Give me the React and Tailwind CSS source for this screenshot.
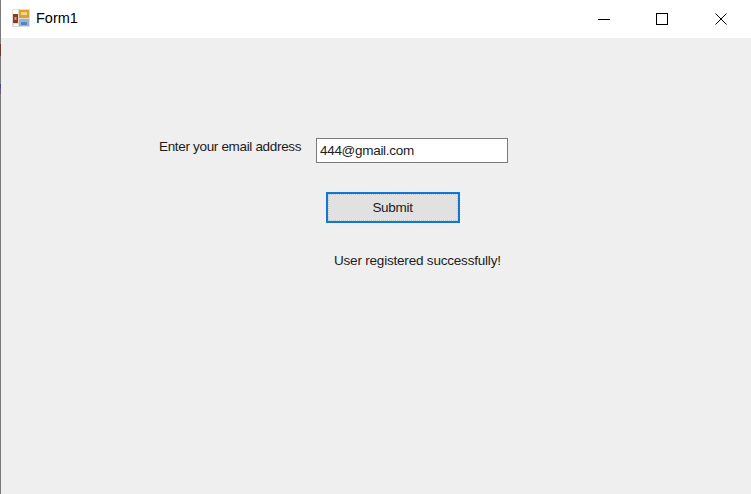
export default function App() {
  return (
    <div className="w-[751px] h-[494px] flex overflow-hidden font-['Liberation_Sans',Arial,sans-serif] text-[#1c1c1c]">
      <div className="w-px h-full bg-[#7a7a7a] flex flex-col">
        <div className="h-[44px] shrink-0" />
        <div className="h-[12px] shrink-0 bg-[#6b3a34]" />
        <div className="h-[28px] shrink-0" />
        <div className="h-[4px] shrink-0 bg-[#3c4a8c]" />
        <div className="h-[6px] shrink-0 bg-[#6a5a7a]" />
      </div>
      <div className="flex-1 flex flex-col bg-[#efefef]">
        <header className="h-[38px] bg-white flex items-center">
          <svg width="18" height="18" viewBox="0 0 18 18" className="ml-[11px] mt-[-2px] shrink-0">
            <rect x="0" y="0" width="18" height="18" fill="#dcdcdc" />
            <rect x="1" y="1" width="5" height="4" fill="#ffffff" />
            <rect x="1" y="5" width="5" height="9" fill="#8c3b22" />
            <rect x="2.5" y="8" width="2" height="3" fill="#d9a05a" />
            <rect x="7" y="1" width="10" height="8" fill="#e0a030" />
            <rect x="9" y="3" width="6" height="3" fill="#f5d678" />
            <rect x="7" y="10" width="10" height="7" fill="#9ab4d0" />
            <rect x="9" y="13" width="6" height="3" fill="#4d86c4" />
            <rect x="2" y="15" width="4" height="2" fill="#ffffff" />
          </svg>
          <span className="ml-[6px] text-[14.5px] text-black">Form1</span>
          <div className="ml-auto flex items-center text-black">
            <svg width="12" height="12" viewBox="0 0 12 12" className="mr-[46px]">
              <path d="M0 6.5H12" stroke="#000" strokeWidth="1" />
            </svg>
            <svg width="12" height="12" viewBox="0 0 12 12" className="mr-[47px]">
              <rect x="0.5" y="0.5" width="11" height="11" fill="none" stroke="#000" strokeWidth="1" />
            </svg>
            <svg width="12" height="12" viewBox="0 0 12 12" className="mr-[24px]">
              <path d="M0.5 0.5L11.5 11.5M11.5 0.5L0.5 11.5" stroke="#000" strokeWidth="1" />
            </svg>
          </div>
        </header>
        <main className="flex-1 flex flex-col pt-[100px] text-[13.5px]">
          <div className="flex items-start">
            <label className="ml-[158px] leading-[17px] w-[157px] whitespace-nowrap tracking-[-0.33px]">Enter your email address</label>
            <div className="w-[192px] h-[25px] bg-white border border-[#7a7a7a] pl-[3px] leading-[23px] tracking-[-0.3px]">444@gmail.com</div>
          </div>
          <button className="ml-[325px] mt-[29px] w-[134px] h-[31px] bg-[#e1e1e1] border-2 border-[#0f78d4] text-center leading-[28px] pr-[1px] tracking-[-0.3px] outline-1 outline-dotted -outline-offset-3 outline-[#c4c4c4]">Submit</button>
          <p className="ml-[333px] mt-[29px] leading-[18px] whitespace-nowrap tracking-[-0.2px]">User registered successfully!</p>
        </main>
      </div>
    </div>
  );
}
